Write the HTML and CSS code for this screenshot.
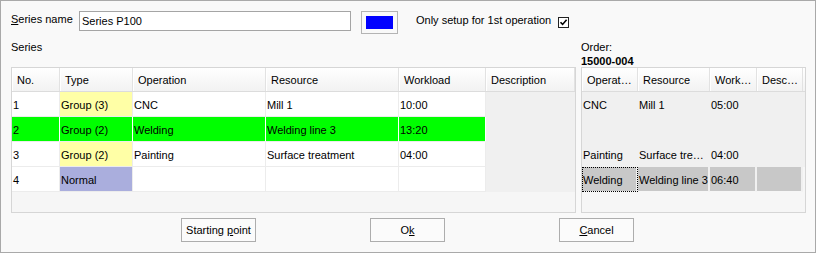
FILE: index.html
```html
<!DOCTYPE html>
<html>
<head>
	<meta charset="UTF-8" />
	<title>Series</title>
	<link rel="stylesheet" href="styles.css">
</head>
<body>
<div class="dialog">

    <div class="top_row">
        <label class="name_label"><u>S</u>eries name</label>
        <div class="text_input">Series P100</div>
        <div class="swatch"><span class="swatch_color"></span></div>
        <span class="option_label">Only setup for 1st operation</span>
        <span class="checkbox">
            <svg width="9" height="9" viewBox="0 0 9 9"><path d="M1.5 4.2 L3.6 6.4 L7.6 1.8" fill="none" stroke="#000" stroke-width="1.6"/></svg>
        </span>
    </div>

    <div class="main">
        <div class="pane">
            <div class="pane_caption">Series</div>
            <div class="grid series_grid">
                <div class="grid_head">
                    <div class="hcell">No.</div>
                    <div class="hcell">Type</div>
                    <div class="hcell">Operation</div>
                    <div class="hcell">Resource</div>
                    <div class="hcell">Workload</div>
                    <div class="hcell">Description</div>
                </div>
                <div class="grid_row">
                    <div class="cell">1</div>
                    <div class="cell group">Group (3)</div>
                    <div class="cell">CNC</div>
                    <div class="cell">Mill 1</div>
                    <div class="cell">10:00</div>
                    <div class="cell empty"></div>
                </div>
                <div class="grid_row current">
                    <div class="cell">2</div>
                    <div class="cell">Group (2)</div>
                    <div class="cell">Welding</div>
                    <div class="cell">Welding line 3</div>
                    <div class="cell">13:20</div>
                    <div class="cell empty"></div>
                </div>
                <div class="grid_row">
                    <div class="cell">3</div>
                    <div class="cell group">Group (2)</div>
                    <div class="cell">Painting</div>
                    <div class="cell">Surface treatment</div>
                    <div class="cell">04:00</div>
                    <div class="cell empty"></div>
                </div>
                <div class="grid_row">
                    <div class="cell">4</div>
                    <div class="cell normal">Normal</div>
                    <div class="cell"></div>
                    <div class="cell"></div>
                    <div class="cell"></div>
                    <div class="cell empty"></div>
                </div>
                <div class="grid_rest"></div>
            </div>
        </div>

        <div class="pane">
            <div class="pane_caption">Order:<br><b>15000-004</b></div>
            <div class="grid order_grid">
                <div class="grid_head">
                    <div class="hcell">Operation</div>
                    <div class="hcell">Resource</div>
                    <div class="hcell">Workload</div>
                    <div class="hcell">Description</div>
                </div>
                <div class="grid_row">
                    <div class="cell">CNC</div>
                    <div class="cell">Mill 1</div>
                    <div class="cell">05:00</div>
                    <div class="cell"></div>
                </div>
                <div class="grid_row">
                    <div class="cell"></div>
                    <div class="cell"></div>
                    <div class="cell"></div>
                    <div class="cell"></div>
                </div>
                <div class="grid_row">
                    <div class="cell">Painting</div>
                    <div class="cell">Surface treatment</div>
                    <div class="cell">04:00</div>
                    <div class="cell"></div>
                </div>
                <div class="grid_row selected">
                    <div class="cell focus">Welding</div>
                    <div class="cell">Welding line 3</div>
                    <div class="cell">06:40</div>
                    <div class="cell"></div>
                </div>
                <div class="grid_rest"></div>
            </div>
        </div>
    </div>

    <div class="buttons">
        <span class="button">Starting <u>p</u>oint</span>
        <span class="button">O<u>k</u></span>
        <span class="button"><u>C</u>ancel</span>
    </div>

</div>
</body>
</html>
```

FILE: styles.css
```css
body{
    margin: 0;
    font-family: "Liberation Sans", "DejaVu Sans", sans-serif;
    font-size: 11px;
    color: #000;
}

.dialog{
    width: 816px;
    height: 253px;
    box-sizing: border-box;
    border: 1px solid #a9a9a9;
    background: #f9f9f9;
    padding: 10px 9px 0 10px;
}

/* top line */
.top_row{
    display: flex;
    align-items: flex-start;
    height: 23px;
}

.name_label{
    width: 68px;
    margin-top: 1px;
    line-height: 14px;
}

.text_input{
    width: 272px;
    height: 20px;
    box-sizing: border-box;
    border: 1px solid #a5a5a5;
    background: #fff;
    padding-left: 2px;
    line-height: 19px;
}

.swatch{
    display: flex;
    align-items: center;
    justify-content: center;
    width: 37px;
    height: 23px;
    box-sizing: border-box;
    margin-left: 10px;
    border: 1px solid #b4b4b4;
}

.swatch_color{
    width: 27px;
    height: 13px;
    background: #0000ff;
}

.option_label{
    margin-left: 18px;
    margin-top: 2px;
    line-height: 14px;
}

.checkbox{
    display: flex;
    align-items: center;
    justify-content: center;
    width: 11px;
    height: 11px;
    box-sizing: border-box;
    margin-left: 7px;
    margin-top: 6px;
    border: 1px solid #222;
    background: #fff;
}

/* grids */
.main{
    display: grid;
    grid-template-columns: 565px 225px;
    column-gap: 5px;
    margin-top: 6px;
}

.pane_caption{
    height: 27px;
    line-height: 14px;
}

.grid{
    display: flex;
    flex-direction: column;
    height: 146px;
    box-sizing: border-box;
    border: 1px solid #d6d6d6;
    background: #f6f6f6;
}

.grid_head, .grid_row{
    display: grid;
}

.series_grid .grid_head, .series_grid .grid_row{
    grid-template-columns: 48px 73px 133px 133px 87px 89px;
}

.order_grid .grid_head, .order_grid .grid_row{
    grid-template-columns: 56px 72px 47px 46px;
}

.grid_head{
    height: 24px;
    box-sizing: border-box;
    border-bottom: 1px solid #dcdcdc;
    background: linear-gradient(#ffffff, #f2f2f2);
}

.hcell{
    padding: 1px 0 0 5px;
    line-height: 22px;
    border-right: 1px solid #e2e2e2;
    box-shadow: inset 1px 0 #fff;
    white-space: nowrap;
    overflow: hidden;
    text-overflow: ellipsis;
}

.order_grid .hcell{
    padding-right: 3px;
}

.grid_row{
    height: 25px;
}

.cell{
    box-sizing: border-box;
    padding: 2px 0 0 1px;
    line-height: 22px;
    border-right: 1px solid #ececec;
    border-bottom: 1px solid #ececec;
    background: #fff;
    white-space: nowrap;
    overflow: hidden;
    text-overflow: ellipsis;
}

.cell.group{
    background: #ffffa6;
}

.cell.normal{
    background: #aaaedd;
}

.cell.empty{
    background: #f0f0f0;
    border-color: #f0f0f0;
}

.grid_row.current .cell{
    background: #00ff00;
    border-right-color: #fff;
}

.grid_row.current .cell.empty{
    background: #f0f0f0;
    border-color: #f0f0f0;
}

.order_grid .cell{
    background: #f0f0f0;
    border-color: #f0f0f0;
    padding-left: 1px;
}

.order_grid .grid_row{
    background: #f0f0f0;
}

.order_grid .grid_row.selected{
    background: #f6f6f6;
}

.order_grid .selected .cell{
    background: #c8c8c8;
    border-right: 2px solid #f0f0f0;
    border-bottom-color: #f6f6f6;
}

.order_grid .cell.focus{
    outline: 1px dotted #000;
    outline-offset: -1px;
}

.grid_rest{
    flex: 1;
}

/* buttons */
.buttons{
    display: flex;
    justify-content: center;
    gap: 114px;
    margin-top: 5px;
    padding-right: 2px;
}

.button{
    width: 75px;
    height: 24px;
    box-sizing: border-box;
    border: 1px solid #adadad;
    background: #fbfbfb;
    text-align: center;
    line-height: 22px;
}
```
